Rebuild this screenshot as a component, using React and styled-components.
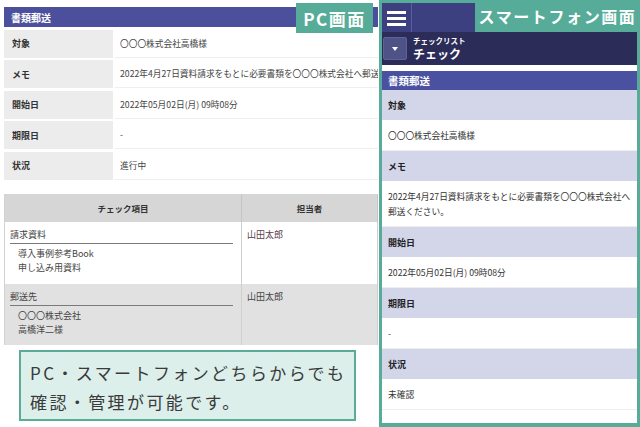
import styled, { createGlobalStyle } from "styled-components";

const GlobalStyle = createGlobalStyle`
  html, body {
    margin: 0;
    padding: 0;
    background: #ffffff;
  }
  body {
    font-family: "Noto Sans CJK JP", "Noto Sans", sans-serif;
    color: #333;
  }
  * {
    box-sizing: border-box;
  }
`;

const Page = styled.div`
  display: flex;
  width: 640px;
  height: 427px;
  overflow: hidden;
  background: #fff;
`;

/* ---------- PC side ---------- */

const PcPane = styled.div`
  position: relative;
  width: 379px;
  padding: 7px 1px 0 4px;
  display: flex;
  flex-direction: column;
`;

const PcBadge = styled.div`
  position: absolute;
  top: 3px;
  left: 296px;
  width: 77px;
  height: 30px;
  background: #56ac98;
  color: #fff;
  font-size: 17px;
  font-weight: 700;
  letter-spacing: 1.5px;
  display: flex;
  align-items: center;
  justify-content: center;
`;

const PcTitle = styled.div`
  height: 20px;
  background: #4b4f9c;
  color: #fff;
  font-size: 10px;
  font-weight: 700;
  padding-left: 7px;
  display: flex;
  align-items: center;
`;

const InfoRow = styled.div`
  display: grid;
  grid-template-columns: 109px 1fr;
  column-gap: 2px;
  height: 28px;
  margin-top: 2.5px;
`;

const InfoLabel = styled.div`
  background: #ececec;
  padding-left: 8px;
  font-size: 9px;
  font-weight: 700;
  color: #333;
  display: flex;
  align-items: center;
`;

const InfoValue = styled.div`
  background: #fff;
  border-bottom: 1px solid #efefef;
  padding-left: 5px;
  font-size: 8.7px;
  color: #444;
  white-space: nowrap;
  overflow: hidden;
  display: flex;
  align-items: center;
`;

const CheckTable = styled.div`
  margin-top: 14px;
  display: grid;
  grid-template-columns: 237px 1fr;
  border-left: 1px solid #d2d2d2;
`;

const HeadCell = styled.div`
  height: 28px;
  background: #d6d6d6;
  font-size: 8.5px;
  font-weight: 700;
  color: #333;
  display: flex;
  align-items: center;
  justify-content: center;
  border-right: 1px solid #c6c6c6;
`;

const BodyCell = styled.div`
  height: ${(p) => p.$h}px;
  background: ${(p) => (p.$shade ? "#e1e1e1" : "#fff")};
  padding: 6px 8px 0 5px;
  border-right: 1px solid #cfcfcf;
  font-size: 9px;
  color: ${(p) => p.$color || "#444"};
  line-height: 13px;
`;

const ItemTitle = styled.div`
  font-size: 9px;
  line-height: 13px;
  padding-bottom: 2px;
  border-bottom: 1px solid #7a7a7a;
  margin-bottom: 3px;
`;

const SubItem = styled.div`
  padding-left: 8px;
  font-size: 9px;
  line-height: 14px;
  color: #444;
`;

const Callout = styled.div`
  margin: 5px 0 0 15px;
  width: 337px;
  height: 71px;
  border: 2px solid #5aab98;
  background: #dcefea;
  padding: 6px 0 0 9px;
  font-size: 17px;
  font-weight: 400;
  line-height: 29px;
  letter-spacing: 2.4px;
  color: #3a3a3a;
  white-space: nowrap;
`;

/* ---------- Smartphone side ---------- */

const PhonePane = styled.div`
  position: relative;
  width: 261px;
  height: 427px;
  border: 3px solid #56ac98;
  border-bottom-width: 4px;
  display: flex;
  flex-direction: column;
  background: #fff;
`;

const SpBadge = styled.div`
  position: absolute;
  top: -3px;
  right: -3px;
  width: 165px;
  height: 32px;
  background: #56ac98;
  color: #fff;
  font-size: 16px;
  font-weight: 700;
  letter-spacing: 1.6px;
  display: flex;
  align-items: center;
  justify-content: center;
`;

const PhoneHeader = styled.div`
  height: 29px;
  background: #3d4080;
  display: flex;
`;

const MenuButton = styled.div`
  width: 30px;
  height: 29px;
  border-right: 1px solid #5b5e99;
  display: flex;
  align-items: center;
  justify-content: center;
`;

const NavBar = styled.div`
  height: 33px;
  background: #2b2c57;
  display: flex;
  align-items: center;
  padding-left: 1px;
  gap: 6px;
`;

const DropButton = styled.div`
  width: 24px;
  height: 23px;
  background: #4f5287;
  border: 1px solid #5f6299;
  border-radius: 2px;
  display: flex;
  align-items: center;
  justify-content: center;
`;

const NavText = styled.div`
  display: flex;
  flex-direction: column;
  color: #fff;
  font-weight: 700;
`;

const NavSmall = styled.span`
  font-size: 7.5px;
  line-height: 10px;
`;

const NavLarge = styled.span`
  font-size: 12px;
  line-height: 15px;
`;

const SectionBar = styled.div`
  margin-top: 6px;
  height: 19px;
  background: #4a51a0;
  color: #fff;
  font-size: 10.5px;
  font-weight: 700;
  padding-left: 6px;
  display: flex;
  align-items: center;
`;

const FieldLabel = styled.div`
  height: 30px;
  background: #d3d5e9;
  color: #222;
  font-size: 9px;
  font-weight: 700;
  padding-left: 6px;
  display: flex;
  align-items: center;
`;

const FieldValue = styled.div`
  padding: 8px 6px 7px;
  font-size: 8.7px;
  line-height: 15px;
  color: #333;
  border-bottom: 1px solid #eeeeee;
  white-space: nowrap;
`;

const MenuIcon = () => (
  <svg width="19" height="16" viewBox="0 0 19 16">
    <rect x="0" y="1" width="19" height="3" fill="#fff" />
    <rect x="0" y="7" width="19" height="3" fill="#fff" />
    <rect x="0" y="13" width="19" height="3" fill="#fff" />
  </svg>
);

const Caret = () => (
  <svg width="6" height="4" viewBox="0 0 6 4">
    <polygon points="0,0 6,0 3,4" fill="#fff" />
  </svg>
);

const pcInfo = [
  ["対象", "〇〇〇株式会社高橋様"],
  ["メモ", "2022年4月27日資料請求をもとに必要書類を〇〇〇株式会社へ郵送ください。"],
  ["開始日", "2022年05月02日(月) 09時08分"],
  ["期限日", "-"],
  ["状況", "進行中"],
];

const checkRows = [
  { title: "請求資料", items: ["導入事例参考Book", "申し込み用資料"], who: "山田太郎", h: 62, color: "#5a3d4a" },
  { title: "郵送先", items: ["〇〇〇株式会社", "高橋洋二様"], who: "山田太郎", h: 61, shade: true },
];

const spFields = [
  ["対象", ["〇〇〇株式会社高橋様"]],
  ["メモ", ["2022年4月27日資料請求をもとに必要書類を〇〇〇株式会社へ", "郵送ください。"]],
  ["開始日", ["2022年05月02日(月) 09時08分"]],
  ["期限日", ["-"]],
  ["状況", ["未確認"]],
];

const App = () => (
  <Page>
    <GlobalStyle />
    <PcPane>
      <PcTitle>書類郵送</PcTitle>
      {pcInfo.map(([label, value]) => (
        <InfoRow key={label}>
          <InfoLabel>{label}</InfoLabel>
          <InfoValue>{value}</InfoValue>
        </InfoRow>
      ))}
      <CheckTable>
        <HeadCell>チェック項目</HeadCell>
        <HeadCell>担当者</HeadCell>
        {checkRows.map((row) => [
          <BodyCell key={row.title} $h={row.h} $shade={row.shade}>
            <ItemTitle>{row.title}</ItemTitle>
            {row.items.map((it) => (
              <SubItem key={it}>{it}</SubItem>
            ))}
          </BodyCell>,
          <BodyCell key={row.title + "-who"} $h={row.h} $shade={row.shade} $color={row.color}>
            {row.who}
          </BodyCell>,
        ])}
      </CheckTable>
      <Callout>
        PC・スマートフォンどちらからでも
        <br />
        確認・管理が可能です。
      </Callout>
      <PcBadge>PC画面</PcBadge>
    </PcPane>

    <PhonePane>
      <PhoneHeader>
        <MenuButton>
          <MenuIcon />
        </MenuButton>
      </PhoneHeader>
      <NavBar>
        <DropButton>
          <Caret />
        </DropButton>
        <NavText>
          <NavSmall>チェックリスト</NavSmall>
          <NavLarge>チェック</NavLarge>
        </NavText>
      </NavBar>
      <SectionBar>書類郵送</SectionBar>
      {spFields.map(([label, lines]) => (
        <div key={label}>
          <FieldLabel>{label}</FieldLabel>
          <FieldValue>
            {lines.map((l, i) => (
              <div key={i}>{l}</div>
            ))}
          </FieldValue>
        </div>
      ))}
      <SpBadge>スマートフォン画面</SpBadge>
    </PhonePane>
  </Page>
);

export default App;
